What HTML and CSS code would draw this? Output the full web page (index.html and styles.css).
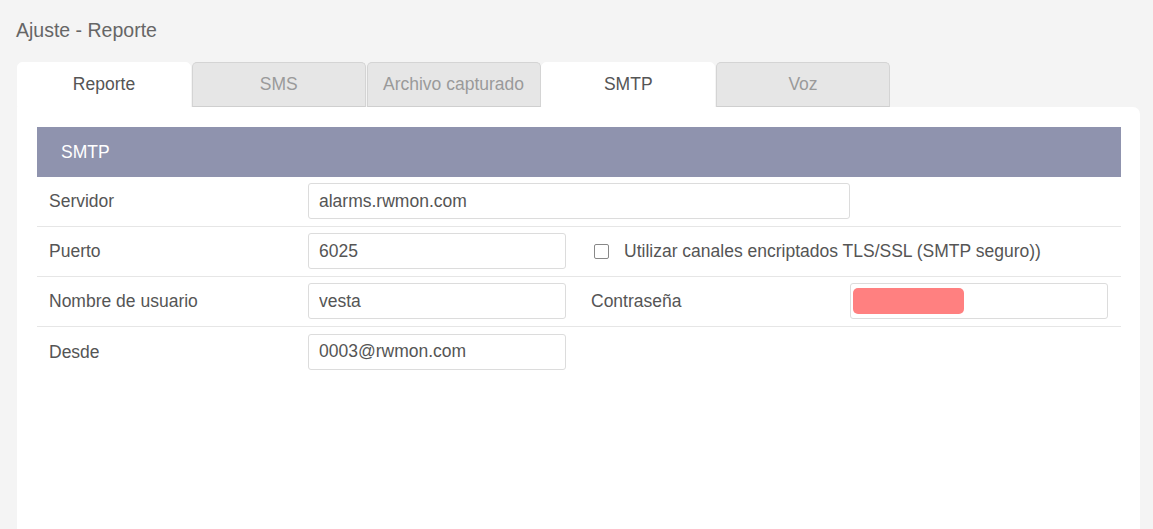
FILE: index.html
```html
<!DOCTYPE html>
<html lang="es">
<head>
    <meta charset="UTF-8">
    <title>Ajuste - Reporte</title>
    <link rel="stylesheet" href="styles.css">
</head>
<body>
    <div class="page">
        <h1 class="page-title">Ajuste - Reporte</h1>

        <div class="tabs">
            <div class="tab active">Reporte</div>
            <div class="tab">SMS</div>
            <div class="tab">Archivo capturado</div>
            <div class="tab active">SMTP</div>
            <div class="tab">Voz</div>
        </div>

        <div class="panel">
            <div class="section-head">SMTP</div>

            <div class="form-row">
                <div class="cell label">Servidor</div>
                <div class="cell span-2"><input class="field wide" type="text" value="alarms.rwmon.com"></div>
            </div>

            <div class="form-row">
                <div class="cell label">Puerto</div>
                <div class="cell"><input class="field" type="text" value="6025"></div>
                <div class="cell span-2 check">
                    <span class="checkbox"></span>
                    Utilizar canales encriptados TLS/SSL (SMTP seguro))
                </div>
            </div>

            <div class="form-row">
                <div class="cell label">Nombre de usuario</div>
                <div class="cell"><input class="field" type="text" value="vesta"></div>
                <div class="cell label">Contraseña</div>
                <div class="cell">
                    <div class="field masked"><span class="redact"></span></div>
                </div>
            </div>

            <div class="form-row last">
                <div class="cell label">Desde</div>
                <div class="cell"><input class="field" type="text" value="0003@rwmon.com"></div>
            </div>
        </div>
    </div>
</body>
</html>
```

FILE: styles.css
```css
body {
    margin: 0;
    background: #f4f4f4;
    font-family: "Liberation Sans", Arial, sans-serif;
    color: #555;
    height: 529px;
    overflow: hidden;
}

.page {
    padding: 0 13px 0 17px;
}

.page-title {
    margin: 0 0 0 -1px;
    padding-top: 19px;
    height: 62px;
    box-sizing: border-box;
    font-size: 19.5px;
    font-weight: normal;
    color: #666;
    line-height: 22px;
}

/* Tabs */
.tabs {
    display: flex;
    height: 45px;
}

.tab {
    width: 174px;
    height: 45px;
    box-sizing: border-box;
    display: flex;
    align-items: center;
    justify-content: center;
    font-size: 17.5px;
    color: #9a9a9a;
    background: #e6e6e6;
    border: 1px solid #d4d4d4;
    border-bottom: 1px solid #cfcfcf;
    border-radius: 5px 5px 0 0;
    margin-right: 0.75px;
}

.tab.active {
    background: #fff;
    color: #555;
    border-color: #fff;
}

/* Panel */
.panel {
    background: #fff;
    border-radius: 0 7px 0 0;
    padding: 20px 19px 0 20px;
    height: 402px;
}

.section-head {
    background: #8f93ae;
    color: #fff;
    height: 50px;
    line-height: 50px;
    padding-left: 24px;
    font-size: 17.5px;
}

.form-row {
    display: grid;
    grid-template-columns: 271px 271px 271px 271px;
    height: 50px;
    box-sizing: border-box;
    border-bottom: 1px solid #e6e6e6;
}

.form-row.last {
    border-bottom: none;
}

.cell {
    display: flex;
    align-items: center;
    font-size: 17.5px;
}

.cell.label {
    padding-left: 12px;
    color: #555;
}

.span-2 {
    grid-column: span 2;
}

.field {
    width: 258px;
    height: 36px;
    box-sizing: border-box;
    border: 1px solid #dcdcdc;
    border-radius: 3px;
    padding: 0 10px;
    font-family: "Liberation Sans", Arial, sans-serif;
    font-size: 17.5px;
    color: #555;
    background: #fff;
    margin-top: -1px;
}

.field.wide {
    width: 542px;
}

.field.masked {
    display: flex;
    align-items: center;
    padding: 0 2px;
}

.redact {
    display: block;
    width: 111px;
    height: 26px;
    background: #ff8080;
    border-radius: 5px;
}

.check {
    padding-left: 15px;
    color: #555;
}

.checkbox {
    width: 13px;
    height: 13px;
    border: 1px solid #888;
    border-radius: 2px;
    margin-right: 15px;
    background: #fff;
}
```
